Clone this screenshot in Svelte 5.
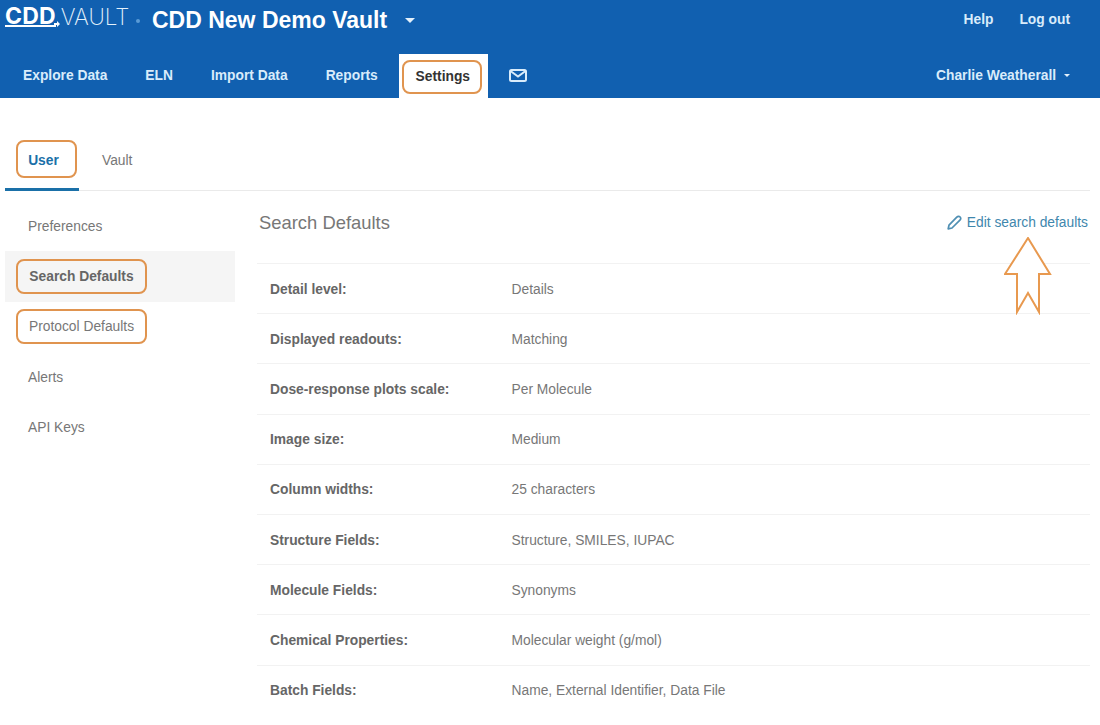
<script>
	const navItems = ["Explore Data", "ELN", "Import Data", "Reports"];
	const sideItems = [
		{ name: "Preferences" },
		{ name: "Search Defaults", active: true, marked: true },
		{ name: "Protocol Defaults", marked: true },
		{ name: "Alerts" },
		{ name: "API Keys" },
	];
	const rows = [
		["Detail level:", "Details"],
		["Displayed readouts:", "Matching"],
		["Dose-response plots scale:", "Per Molecule"],
		["Image size:", "Medium"],
		["Column widths:", "25 characters"],
		["Structure Fields:", "Structure, SMILES, IUPAC"],
		["Molecule Fields:", "Synonyms"],
		["Chemical Properties:", "Molecular weight (g/mol)"],
		["Batch Fields:", "Name, External Identifier, Data File"],
	];
</script>

<header class="header">
	<div class="top-bar">
		<div class="logo">
			<span class="logo-cdd">CDD</span>
			<svg class="logo-tick" width="6" height="6" viewBox="0 0 6 6" fill="#fff"><path d="M0 2 H3 V0 L6 3 L3 6 V4 H0 Z" /></svg>
			<span class="logo-vault">VAULT</span>
		</div>
		<span class="logo-dot"></span>
		<span class="vault-name">CDD New Demo Vault</span>
		<span class="caret big"></span>
		<div class="top-links">
			<span>Help</span>
			<span>Log out</span>
		</div>
	</div>
	<nav class="nav">
		{#each navItems as item}
			<span class="nav-item">{item}</span>
		{/each}
		<div class="nav-settings"><span class="mark settings-mark">Settings</span></div>
		<svg class="mail" width="18" height="13" viewBox="0 0 18 13" fill="none" stroke="#d9ecfb" stroke-width="2">
			<rect x="1" y="1" width="16" height="11" rx="1.5" />
			<path d="M1.5 2 L9 7.5 L16.5 2" />
		</svg>
		<div class="user">Charlie Weatherall <span class="caret small"></span></div>
	</nav>
</header>

<main class="main">
	<div class="tabs">
		<div class="tab tab-active"><span class="mark user-mark">User</span></div>
		<div class="tab">Vault</div>
	</div>
	<div class="body">
		<aside class="side">
			{#each sideItems as item}
				<div class="side-item" class:active={item.active}>
					<span class:mark={item.marked} class:side-mark={item.marked}>{item.name}</span>
				</div>
			{/each}
		</aside>
		<section class="content">
			<div class="content-head">
				<h2>Search Defaults</h2>
				<span class="edit">
					<svg width="15" height="15" viewBox="0 0 15 15" fill="none" stroke="#4f8fb3" stroke-width="1.7" stroke-linejoin="round">
						<path d="M1.2 13.8 L2 10.2 L9.8 2.2 C10.9 1.1 12.2 1.1 13.1 2 C14 2.9 14 4.1 12.9 5.2 L5 13 Z" />
					</svg>
					Edit search defaults
				</span>
				<svg class="arrow" width="48" height="78" viewBox="0 0 48 78" fill="#fff" stroke="#e8994f" stroke-width="2">
					<polygon points="24,1 46,37 35,37 35,75 24,56 13,75 13,37 1,37" />
				</svg>
			</div>
			{#each rows as row}
				<div class="row">
					<span class="label">{row[0]}</span>
					<span class="value">{row[1]}</span>
				</div>
			{/each}
		</section>
	</div>
</main>

<style>
	:global(body) {
		margin: 0;
		background: #fff;
		font-family: "Liberation Sans", Arial, sans-serif;
		overflow: hidden;
	}

	.header {
		background: #1160b0;
		height: 98px;
		color: #d9ecfb;
		font-weight: 700;
		font-size: 13.8px;
	}

	.top-bar {
		display: flex;
		align-items: center;
		height: 41px;
		padding-left: 5px;
	}

	.logo {
		display: flex;
		align-items: center;
		width: 125px;
		margin-bottom: 7px;
		color: #fff;
		font-size: 23px;
		line-height: 26px;
	}

	.logo-cdd {
		font-family: "Inter", sans-serif;
		font-weight: 700;
		letter-spacing: 0.2px;
		border-bottom: 2px solid #fff;
		line-height: 17px;
	}

	.logo-tick {
		margin: 14px 0 0 -2px;
	}

	.logo-vault {
		font-family: "Inter", sans-serif;
		font-weight: 200;
		font-size: 22.5px;
		margin-left: 1px;
		color: #e4f1fb;
	}

	.logo-dot {
		width: 4px;
		height: 4px;
		border-radius: 50%;
		background: #5a9bd6;
		margin: 0 12px 0 6px;
	}

	.vault-name {
		color: #fff;
		font-size: 23px;
	}

	.caret {
		display: inline-block;
		border-left: 5px solid transparent;
		border-right: 5px solid transparent;
		border-top: 5px solid #e4f1fb;
	}

	.caret.big {
		margin-left: 18px;
	}

	.caret.small {
		border-left-width: 3px;
		border-right-width: 3px;
		border-top-width: 3px;
		margin-left: 4px;
		vertical-align: 3px;
	}

	.top-links {
		margin: 0 0 3px auto;
		display: flex;
		gap: 26px;
		padding-right: 30px;
	}

	.nav {
		display: flex;
		align-items: center;
		height: 57px;
		padding-left: 23px;
	}

	.nav-item {
		margin-right: 38px;
		padding-top: 12px;
	}

	.nav-settings {
		align-self: flex-end;
		display: flex;
		align-items: flex-start;
		justify-content: center;
		box-sizing: border-box;
		width: 89px;
		height: 44px;
		margin-left: -17px;
		padding: 6px 6px 0 3px;
		background: #fff;
		color: #333;
	}

	.mark {
		box-sizing: border-box;
		display: inline-block;
		border: 2px solid #e0944f;
		border-radius: 8px;
	}

	.settings-mark {
		width: 80px;
		height: 34px;
		padding-left: 2px;
		line-height: 30px;
		text-align: center;
	}

	.mail {
		margin: 11px 0 0 21px;
	}

	.user {
		margin-left: auto;
		padding: 12px 30px 0 0;
	}

	.main {
		padding: 42px 10px 0 5px;
	}

	.tabs {
		display: flex;
		height: 50px;
		border-bottom: 1px solid #eaeaea;
		font-size: 13.8px;
		color: #777;
	}

	.tab {
		display: flex;
		align-items: center;
		box-sizing: border-box;
		height: 51px;
		padding: 0 0 10px 23px;
	}

	.tab-active {
		width: 74px;
		padding: 0 0 10px 11px;
		border-bottom: 3px solid #1a70a8;
	}

	.user-mark {
		width: 61px;
		height: 38px;
		padding-right: 6px;
		line-height: 38px;
		text-align: center;
		color: #1a70a8;
		font-weight: 700;
	}

	.body {
		display: flex;
	}

	.side {
		width: 230px;
		padding-top: 10px;
		margin-right: 22px;
		font-size: 13.8px;
		color: #777;
	}

	.side-item {
		display: flex;
		align-items: center;
		height: 50.3px;
		padding-left: 23px;
	}

	.side-item.active {
		background: #f5f5f5;
		font-weight: 700;
		color: #666;
	}

	.side-mark {
		box-sizing: border-box;
		width: 131px;
		height: 35px;
		line-height: 31px;
		margin-left: -12px;
		text-align: center;
	}

	.content {
		flex: 1;
	}

	.content-head {
		position: relative;
		display: flex;
		justify-content: space-between;
		align-items: center;
		height: 72px;
	}

	h2 {
		margin: 0 0 8px 2px;
		font-size: 18.4px;
		font-weight: 400;
		color: #777;
	}

	.edit {
		display: flex;
		align-items: center;
		gap: 5px;
		margin: 0 2px 10px 0;
		font-size: 13.8px;
		color: #3f87ad;
	}

	.arrow {
		position: absolute;
		right: 38px;
		top: 46px;
	}

	.row {
		display: flex;
		align-items: center;
		box-sizing: border-box;
		height: 50.2px;
		padding: 1px 0 0 13px;
		border-top: 1px solid #f2f2f2;
		font-size: 13.8px;
		color: #777;
	}

	.label {
		width: 241.5px;
		font-weight: 700;
		color: #666;
	}
</style>
